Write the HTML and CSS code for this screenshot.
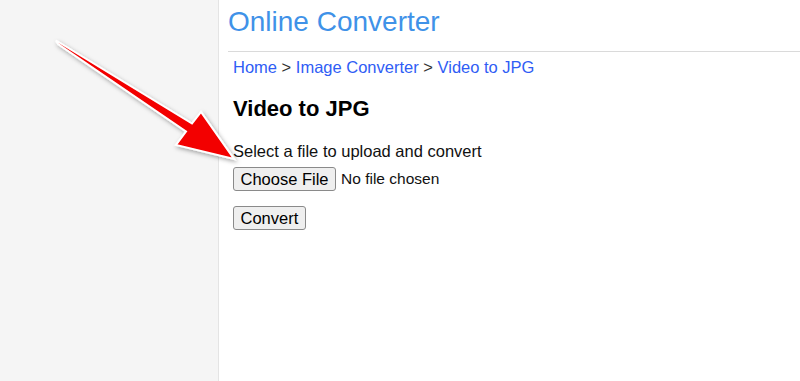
FILE: index.html
```html
<!DOCTYPE html>
<html lang="en">
<head>
    <meta charset="UTF-8">
    <meta name="viewport" content="width=device-width, initial-scale=1.0">
    <title>Video to JPG - Online Converter</title>
    <link rel="stylesheet" href="styles.css">
</head>
<body>
    <div class="page">
        <aside class="sidebar"></aside>
        <main class="main">
            <h1 class="site-title">Online Converter</h1>
            <div class="content">
                <nav class="breadcrumb">
                    <a href="#">Home</a> &gt; <a href="#">Image Converter</a> &gt; <a href="#">Video to JPG</a>
                </nav>
                <h2 class="page-title">Video to JPG</h2>
                <form class="upload-form" onsubmit="return false;">
                    <div class="label">Select a file to upload and convert</div>
                    <div class="file-row">
                        <button type="button" class="btn">Choose File</button>
                        <span class="file-name">No file chosen</span>
                    </div>
                    <div class="submit-row">
                        <button type="submit" class="btn">Convert</button>
                    </div>
                </form>
            </div>
        </main>
    </div>

    <svg class="arrow" width="800" height="381" viewBox="0 0 800 381">
        <defs>
            <filter id="shadow" x="-10%" y="-10%" width="130%" height="130%">
                <feDropShadow dx="1.5" dy="2" stdDeviation="2" flood-color="#000" flood-opacity="0.35"/>
            </filter>
        </defs>
        <polygon points="56,40.5 192,123.5 201,112 234,159 176,145 186,131.5 58,44"
                 fill="#f30000" stroke="#fff" stroke-width="2" stroke-linejoin="miter" filter="url(#shadow)"/>
    </svg>
</body>
</html>
```

FILE: styles.css
```css
body {
    margin: 0;
    font-family: "Liberation Sans", Arial, sans-serif;
    font-size: 16.5px;
    color: #111;
    background-color: #fff;
}
.page {
    display: flex;
    min-height: 100vh;
}
.sidebar {
    width: 218px;
    flex-shrink: 0;
    background-color: #f5f5f5;
    border-right: 1px solid #e4e4e4;
}
.main {
    flex: 1;
    padding-left: 9px;
}
.site-title {
    margin: 6px 0 0;
    padding-bottom: 13px;
    font-size: 28px;
    font-weight: normal;
    line-height: 32px;
    color: #3f92e8;
    border-bottom: 1px solid #dadada;
}
.content {
    padding-left: 5px;
}
.breadcrumb {
    margin-top: 6px;
    line-height: 19px;
    color: #333;
}
.breadcrumb a {
    color: #2f5df5;
    text-decoration: none;
}
.page-title {
    margin: 19px 0 0;
    font-size: 22px;
    line-height: 26px;
    color: #000;
}
.upload-form {
    margin-top: 20px;
}
.label {
    line-height: 19px;
}
.file-row {
    display: flex;
    align-items: center;
    gap: 5px;
    margin-top: 6px;
}
.submit-row {
    margin-top: 15px;
}
.btn {
    font-family: inherit;
    font-size: 16.5px;
    line-height: 20px;
    padding: 1px 6.5px;
    color: #000;
    background-color: #efefef;
    border: 1px solid #8a8a8a;
    border-radius: 3px;
}
.file-name {
    font-size: 15.5px;
    color: #111;
}
.arrow {
    position: absolute;
    top: 0;
    left: 0;
    pointer-events: none;
}
```
